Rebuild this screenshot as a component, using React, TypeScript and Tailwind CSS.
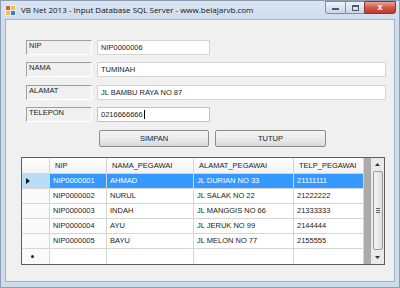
import React from "react";

const rows = [
  { nip: "NIP0000001", nama: "AHMAD", alamat: "JL DURIAN NO 33", telp: "21111111" },
  { nip: "NIP0000002", nama: "NURUL", alamat: "JL SALAK NO 22", telp: "21222222" },
  { nip: "NIP0000003", nama: "INDAH", alamat: "JL MANGGIS NO 66", telp: "21333333" },
  { nip: "NIP0000004", nama: "AYU", alamat: "JL JERUK NO 99", telp: "2144444" },
  { nip: "NIP0000005", nama: "BAYU", alamat: "JL MELON NO 77", telp: "2155555" },
];

function AppIcon() {
  return (
    <svg width="11" height="11" viewBox="0 0 11 11">
      <rect x="0" y="0" width="11" height="11" fill="#e8e8e8" />
      <rect x="1" y="1" width="4" height="4" fill="#e05a2b" />
      <rect x="6" y="1" width="4" height="4" fill="#f3c33b" />
      <rect x="1" y="6" width="4" height="4" fill="#f3c33b" />
      <rect x="6" y="6" width="4" height="4" fill="#3a7fd6" />
    </svg>
  );
}

function FieldLabel({ text }: { text: string }) {
  return (
    <div className="h-[15px] w-[66px] border border-t-[#a0a0a0] border-l-[#a0a0a0] border-b-white border-r-white pl-[2px] text-[7.5px] leading-[10px] text-[#222]">
      {text}
    </div>
  );
}

function TextBox({ value, wide, focus }: { value: string; wide?: boolean; focus?: boolean }) {
  return (
    <div
      className={
        "h-[15px] bg-white border pl-[3px] text-[7.5px] leading-[13px] text-[#222] flex items-center " +
        (wide ? "w-[289px] " : "w-[113px] ") +
        (focus ? "border-[#a9c7e8]" : "border-[#d4d4d4]")
      }
    >
      {value}
      {focus && <span className="ml-px h-[9px] w-px bg-black" />}
    </div>
  );
}

function WinButton({ text, w }: { text: string; w: string }) {
  return (
    <div
      className={
        w +
        " h-[17px] rounded-[2px] border border-[#8c8c8c] bg-gradient-to-b from-[#f4f4f4] via-[#ebebeb] to-[#d9d9d9] flex items-center justify-center text-[7.5px] text-[#222]"
      }
    >
      {text}
    </div>
  );
}

export default function App() {
  return (
    <div
      className="w-[400px] h-[288px] bg-[#cfdcec] border border-[#8a9db5] flex flex-col overflow-hidden"
      style={{ fontFamily: '"Liberation Sans", Arial, sans-serif' }}
    >
      {/* title bar */}
      <div className="h-[18px] flex items-start shrink-0 bg-gradient-to-b from-[#dbe5f2] to-[#cfdcec]">
        <div className="pl-[4px] pt-[4px]">
          <AppIcon />
        </div>
        <div className="pl-[5px] pt-[3px] text-[8px] text-[#111]" style={{ fontFamily: '"Open Sans", "Liberation Sans", sans-serif' }}>
          VB Net 2013 - Input Database SQL Server - www.belajarvb.com
        </div>
        <div className="ml-auto mr-[3px] flex h-[13px]">
          <div className="w-[21px] h-full border border-[#7b8da4] rounded-bl-[3px] bg-gradient-to-b from-[#eef3f9] to-[#c9d6e6] flex items-center justify-center">
            <div className="w-[7px] h-[2px] bg-[#4c5a6c] mt-[3px]" />
          </div>
          <div className="w-[18px] h-full border-y border-[#7b8da4] bg-gradient-to-b from-[#eef3f9] to-[#c9d6e6] flex items-center justify-center">
            <div className="w-[7px] h-[6px] border border-[#4c5a6c] border-t-2" />
          </div>
          <div className="w-[32px] h-full border border-[#7b3a33] rounded-br-[3px] bg-gradient-to-b from-[#e8a093] via-[#d35a47] to-[#c0392b] flex items-center justify-center text-white text-[9px] font-bold leading-none">
            x
          </div>
        </div>
      </div>

      {/* client area */}
      <div className="mx-[4px] mb-[5px] flex-1 bg-[#f0f0f0] border border-[#a7b4c4] pt-[20px] pl-[20px]">
        <div className="flex flex-col gap-[7px]">
          <div className="flex gap-[5px]">
            <FieldLabel text="NIP" />
            <TextBox value="NIP0000006" />
          </div>
          <div className="flex gap-[5px]">
            <FieldLabel text="NAMA" />
            <TextBox value="TUMINAH" wide />
          </div>
          <div className="flex gap-[5px] mt-px">
            <FieldLabel text="ALAMAT" />
            <TextBox value="JL BAMBU RAYA NO 87" wide />
          </div>
          <div className="flex gap-[5px]">
            <FieldLabel text="TELEPON" />
            <TextBox value="0216666666" focus />
          </div>
        </div>

        <div className="flex gap-[6px] mt-[8px] ml-[73px]">
          <WinButton text="SIMPAN" w="w-[110px]" />
          <WinButton text="TUTUP" w="w-[111px]" />
        </div>

        {/* data grid */}
        <div className="mt-[10px] -ml-[5px] w-[364px] h-[108px] border border-[#5e5e5e] bg-[#ababab] flex text-[7.5px] text-[#222]">
          <div className="flex flex-col">
            <div className="flex h-[16px] bg-gradient-to-b from-white to-[#f2f2f2] border-b border-[#d5d5d5]">
              <div className="w-[28px] border-r border-[#d5d5d5]" />
              <div className="w-[57px] border-r border-[#d5d5d5] pl-[5px] flex items-center">NIP</div>
              <div className="w-[87px] border-r border-[#d5d5d5] pl-[5px] flex items-center">NAMA_PEGAWAI</div>
              <div className="w-[100px] border-r border-[#d5d5d5] pl-[5px] flex items-center">ALAMAT_PEGAWAI</div>
              <div className="w-[70px] border-r border-[#d5d5d5] pl-[5px] flex items-center">TELP_PEGAWAI</div>
            </div>
            {rows.map((r, i) => {
              const sel = i === 0;
              return (
                <div key={r.nip} className="flex h-[15px]">
                  <div
                    className={
                      "w-[28px] border-r border-b border-[#d5d5d5] flex items-center pl-[4px] " +
                      (sel ? "bg-[#b9dcf7]" : "bg-[#fafafa]")
                    }
                  >
                    {sel && (
                      <svg width="4" height="6" viewBox="0 0 4 6">
                        <path d="M0 0 L4 3 L0 6 Z" fill="#111" />
                      </svg>
                    )}
                  </div>
                  {[
                    { v: r.nip, w: "w-[57px]" },
                    { v: r.nama, w: "w-[87px]" },
                    { v: r.alamat, w: "w-[100px]" },
                    { v: r.telp, w: "w-[70px]" },
                  ].map((c) => (
                    <div
                      key={c.w}
                      className={
                        c.w +
                        " border-r border-b border-[#d5d5d5] pl-[3px] flex items-center " +
                        (sel ? "bg-[#3399ff] text-white" : "bg-white")
                      }
                    >
                      {c.v}
                    </div>
                  ))}
                </div>
              );
            })}
            <div className="flex h-[15px]">
              <div className="w-[28px] border-r border-[#d5d5d5] bg-[#fafafa] flex items-center pl-[9px]">
                <div className="w-[3px] h-[3px] rounded-full bg-[#222]" />
              </div>
              <div className="w-[57px] border-r border-[#d5d5d5] bg-white" />
              <div className="w-[87px] border-r border-[#d5d5d5] bg-white" />
              <div className="w-[100px] border-r border-[#d5d5d5] bg-white" />
              <div className="w-[70px] border-r border-[#d5d5d5] bg-white" />
            </div>
          </div>
          <div className="flex-1" />
          {/* scrollbar */}
          <div className="w-[13px] bg-[#eaeaea] flex flex-col items-center">
            <div className="h-[13px] flex items-center justify-center">
              <svg width="5" height="3" viewBox="0 0 5 3">
                <path d="M0 3 L2.5 0 L5 3 Z" fill="#333" />
              </svg>
            </div>
            <div className="w-[10px] flex-1 mb-px rounded-[2px] border border-[#9a9a9a] bg-gradient-to-r from-[#f6f6f6] to-[#dcdcdc] flex items-center justify-center">
              <div className="flex flex-col gap-px">
                <div className="w-[4px] h-px bg-[#666]" />
                <div className="w-[4px] h-px bg-[#666]" />
                <div className="w-[4px] h-px bg-[#666]" />
              </div>
            </div>
            <div className="h-[13px] flex items-center justify-center">
              <svg width="5" height="3" viewBox="0 0 5 3">
                <path d="M0 0 L2.5 3 L5 0 Z" fill="#333" />
              </svg>
            </div>
          </div>
        </div>
      </div>
    </div>
  );
}
